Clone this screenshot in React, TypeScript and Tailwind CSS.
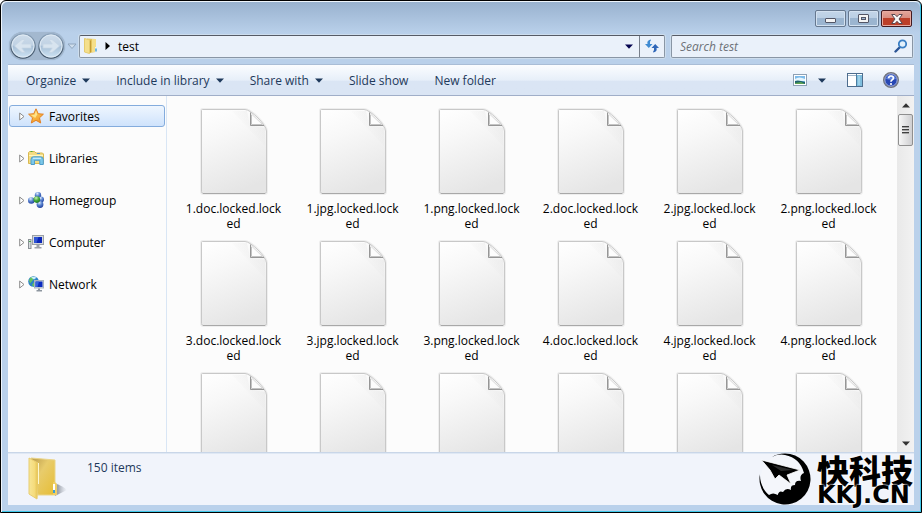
import { useId } from "react";
import type { ReactNode } from "react";

const files = [
  "1.doc", "1.jpg", "1.png", "2.doc", "2.jpg", "2.png",
  "3.doc", "3.jpg", "3.png", "4.doc", "4.jpg", "4.png",
  "5.doc", "5.jpg", "5.png", "6.doc", "6.jpg", "6.png",
];

function Caret({ className = "" }: { className?: string }) {
  return (
    <svg className={className} width="8" height="5" viewBox="0 0 8 5" aria-hidden="true">
      <path d="M0 0.5h8L4 4.8z" fill="currentColor" />
    </svg>
  );
}

function FileIcon() {
  const id = useId();
  return (
    <svg width="68" height="87" viewBox="0 0 68 87" className="block shrink-0" aria-hidden="true">
      <defs>
        <linearGradient id={id} x1="0.2" y1="0" x2="0.5" y2="1">
          <stop offset="0" stopColor="#fefefe" />
          <stop offset="0.3" stopColor="#f8f8f8" />
          <stop offset="1" stopColor="#e5e5e5" />
        </linearGradient>
        <linearGradient id={id + "s"} x1="0" y1="1" x2="1" y2="0">
          <stop offset="0.4" stopColor="#d2d2d2" stopOpacity="0" />
          <stop offset="1" stopColor="#cfcfcf" />
        </linearGradient>
      </defs>
      <path d="M2.5 1.5H45C51 1.5 66.5 17 66.5 23V83.5Q66.5 85.5 64.5 85.5H3.5Q1.5 85.5 1.5 83.5V2.5Q1.5 1.5 2.5 1.5Z" fill="none" stroke="#eeeeee" strokeWidth="3" />
      <path d="M2.5 1.5H45C51 1.5 66.5 17 66.5 23V83.5Q66.5 85.5 64.5 85.5H3.5Q1.5 85.5 1.5 83.5V2.5Q1.5 1.5 2.5 1.5Z" fill={`url(#${id})`} stroke="#c8c8c8" />
      <path d="M32 3H47L50 17.5L65 20V38Z" fill={`url(#${id}s)`} opacity="0.35" />
      <path d="M3 85.5H65" stroke="#a8a8a8" />
      <path d="M50.5 5V17.5H63.5Z" fill="#fdfdfd" stroke="#dadada" />
      <path d="M50.5 4.5V17.5H64" fill="none" stroke="#969696" />
      <path d="M51.5 7V16.5H62" fill="none" stroke="#c4c4c4" />
    </svg>
  );
}

function StarIcon() {
  return (
    <svg width="16" height="16" viewBox="0 0 16 16" aria-hidden="true">
      <defs>
        <linearGradient id="star" x1="0" y1="0" x2="0.6" y2="1">
          <stop offset="0" stopColor="#fff3a0" />
          <stop offset="0.5" stopColor="#fbc04a" />
          <stop offset="1" stopColor="#f09a2a" />
        </linearGradient>
      </defs>
      <path d="M8 0.8L10.200 5.7L15.400 6.2L11.500 9.8L12.700 15L8 12.300L3.300 15L4.500 9.8L0.600 6.2L5.800 5.7Z" fill="url(#star)" stroke="#e27f22" strokeLinejoin="round" />
      <path d="M8 3L9.300 6.6L7.200 10L3.500 7.2L6.600 6.7Z" fill="#fff4a8" opacity="0.7" />
    </svg>
  );
}

function LibrariesIcon() {
  return (
    <svg width="16" height="16" viewBox="0 0 16 16" aria-hidden="true">
      <path d="M0.5 13.500V2.500L1.500 1.500H6.500L8 3H14.500L15.500 4V13.500Z" fill="#f3dc83" stroke="#d9b951" />
      <path d="M1 5.500H15" stroke="#fff5bd" />
      <path d="M2.500 1.500h2" stroke="#4caa3a" />
      <path d="M9 3.500h3" stroke="#5596c8" />
      <path d="M3 14.500V9.500Q3 6.800 5.500 6.800H12.500Q15.300 6.800 15.300 9.500V14.500H11.800V10.300H6.500V14.500Z" fill="#7cc8e9" stroke="#4e9dcc" />
      <path d="M5 8.300H13" stroke="#d8f2fb" />
    </svg>
  );
}

function HomegroupIcon() {
  return (
    <svg width="16" height="16" viewBox="0 0 16 16" aria-hidden="true">
      <defs>
        <radialGradient id="blue" cx="0.4" cy="0.25" r="0.8">
          <stop offset="0" stopColor="#e3eefc" />
          <stop offset="0.45" stopColor="#5d87d2" />
          <stop offset="1" stopColor="#1b3a98" />
        </radialGradient>
        <radialGradient id="green" cx="0.4" cy="0.25" r="0.8">
          <stop offset="0" stopColor="#c9f2b5" />
          <stop offset="0.5" stopColor="#46ab3c" />
          <stop offset="1" stopColor="#187321" />
        </radialGradient>
      </defs>
      <circle cx="10" cy="3.2" r="3.200" fill="url(#blue)" />
      <circle cx="3.300" cy="8.500" r="3.300" fill="url(#blue)" />
      <circle cx="13" cy="7.500" r="3" fill="url(#blue)" />
      <circle cx="12" cy="12.500" r="3.400" fill="url(#blue)" />
      <circle cx="8.800" cy="7.600" r="3.300" fill="url(#green)" />
    </svg>
  );
}

function ComputerIcon() {
  return (
    <svg width="16" height="16" viewBox="0 0 16 16" aria-hidden="true">
      <rect x="0.500" y="5.500" width="2.500" height="9" fill="#d8dcdf" stroke="#8b9196" />
      <path d="M1 7.500h2" stroke="#46a850" />
      <rect x="4.500" y="1.500" width="11" height="9" fill="#d5d8dc" stroke="#9ba1a7" />
      <rect x="6" y="3" width="8" height="6" fill="#0b26b8" />
      <path d="M6 3H10.500L8.500 9H6Z" fill="#2f55d4" />
      <path d="M8.500 11H11.500V13H13.500V14.500H6.500V13H8.500Z" fill="#9da2a8" />
    </svg>
  );
}

function NetworkIcon() {
  return (
    <svg width="16" height="16" viewBox="0 0 16 16" aria-hidden="true">
      <circle cx="5.500" cy="5.500" r="5.300" fill="#2b82c9" />
      <path d="M1 4Q3 0 6 1L5 4L2 7.500ZM6 6L8 8L6 11L4 9Z" fill="#64c45c" />
      <path d="M3 1.500Q6 0 8.500 1.800L6 3.500Z" fill="#cdeffa" />
      <rect x="6.500" y="4.500" width="9" height="7.500" fill="#cfd6df" stroke="#a9b4bf" />
      <rect x="7.500" y="5.500" width="7" height="5.500" fill="#0c2cc0" />
      <path d="M7.500 5.500H11L9.500 11H7.500Z" fill="#3563dc" />
      <path d="M10 12.500H12V14H14V15.500H8.500V14H10Z" fill="#8d969f" />
    </svg>
  );
}

function FolderIcon({ width, height }: { width: number; height: number }) {
  const id = useId();
  return (
    <svg width={width} height={height} viewBox="0 0 40 44" aria-hidden="true">
      <defs>
        <linearGradient id={id}>
          <stop offset="0" stopColor="#f7e596" />
          <stop offset="0.6" stopColor="#f5dc7c" />
          <stop offset="1" stopColor="#e3bf4c" />
        </linearGradient>
        <linearGradient id={id + "b"} x1="0" y1="0" x2="1" y2="1">
          <stop offset="0" stopColor="#b99a4c" />
          <stop offset="0.4" stopColor="#e8cc6c" />
          <stop offset="1" stopColor="#e6bd35" />
        </linearGradient>
        <linearGradient id={id + "s"}>
          <stop offset="0.3" stopColor="#777d88" stopOpacity="0.7" />
          <stop offset="1" stopColor="#a5abb5" stopOpacity="0" />
        </linearGradient>
      </defs>
      <path d="M26 26Q35 29 39 33L27 39Z" fill={`url(#${id}s)`} />
      <path d="M3 1L27 3V38L10 38Z" fill={`url(#${id}b)`} stroke="#ead58a" />
      <path d="M25 25Q29 25 29 28V38L25 38Z" fill="#f0cf66" />
      <path d="M26 27V34" stroke="#fff" strokeWidth="2" />
      <path d="M26 33V36" stroke="#3c9fd6" strokeWidth="2" />
      <path d="M1 1L10 6V27L9 42L1 37Z" fill={`url(#${id})`} stroke="#e8cd70" />
      <path d="M10.500 6V27" stroke="#fdf7cf" />
    </svg>
  );
}

function SmallFolderIcon() {
  return (
    <svg width="14" height="16" viewBox="0 0 14 16" className="shrink-0" aria-hidden="true">
      <path d="M3 0.500L11.500 1V14L5 15Z" fill="#e3c35c" />
      <path d="M8 1H12V14H8Z" fill="#f5df8a" />
      <path d="M0.500 0.500L5.500 2V15.500L0.500 14Z" fill="#f4df8c" stroke="#e5cb6f" />
      <path d="M6.500 2.500V14.500" stroke="#c39c35" />
      <path d="M11 9H13V14H11Z" fill="#e9f3f8" />
      <path d="M12 10.500V13.500" stroke="#4aa3d8" strokeWidth="1.500" />
    </svg>
  );
}

function Orb({ flip = false }: { flip?: boolean }) {
  const id = useId();
  return (
    <svg width="28" height="28" viewBox="0 0 28 28" aria-hidden="true" className={flip ? "block -scale-x-100" : "block"}>
      <defs>
        <linearGradient id={id} x1="0" y1="0" x2="0" y2="1">
          <stop offset="0" stopColor="#cfddeb" />
          <stop offset="0.46" stopColor="#c0d2e4" />
          <stop offset="0.52" stopColor="#a8c0d7" />
          <stop offset="1" stopColor="#d0e6f6" />
        </linearGradient>
        <linearGradient id={id + "r"} x1="0" y1="0" x2="0" y2="1">
          <stop offset="0" stopColor="#8da4bc" />
          <stop offset="1" stopColor="#3e5063" />
        </linearGradient>
      </defs>
      <circle cx="14" cy="14" r="12.200" fill={`url(#${id})`} stroke={`url(#${id}r)`} strokeWidth="1.200" />
      <circle cx="14" cy="14" r="11" fill="none" stroke="#dfeaf4" />
      <path d="M5.500 14L13 7.500H16L12.800 12H22V16H12.800L16 20.500H13Z" fill="#d8e4ef" stroke="#c6d6e5" strokeWidth="0.800" />
    </svg>
  );
}

function ToolButton({ children, menu = false }: { children: ReactNode; menu?: boolean }) {
  return (
    <button type="button" className="flex items-center gap-[6px] whitespace-nowrap">
      {children}
      {menu && <Caret />}
    </button>
  );
}

function WindowButton({ label, close = false, children }: { label: string; close?: boolean; children: ReactNode }) {
  return (
    <button
      type="button"
      aria-label={label}
      className={
        "flex h-[17px] w-[31px] items-center justify-center rounded-[2px] border " +
        (close
          ? "border-[#431a20] bg-linear-to-b from-[#e3a79c] from-0% via-[#d98e82] via-45% to-[#c9634c] shadow-[inset_0_0_0_1px_#e7aaa0,inset_0_-8px_0_0_#bc3f29]"
          : "border-[#66788f] bg-linear-to-b from-[#c3d5e8] to-[#b0c8e0] shadow-[inset_0_0_0_1px_#d3e1f0,inset_0_-8px_0_0_#9bb5d0]")
      }
    >
      {children}
    </button>
  );
}

const places = [
  { name: "Favorites", icon: <StarIcon />, active: true },
  { name: "Libraries", icon: <LibrariesIcon />, active: false },
  { name: "Homegroup", icon: <HomegroupIcon />, active: false },
  { name: "Computer", icon: <ComputerIcon />, active: false },
  { name: "Network", icon: <NetworkIcon />, active: false },
];

function Watermark() {
  return (
    <div className="absolute right-2 bottom-[7px] flex items-center gap-1 text-black">
      <svg width="56" height="52" viewBox="0 0 56 52" aria-hidden="true">
        <circle cx="28" cy="26" r="24.500" fill="#f4f6fb" />
        <path
          fillRule="evenodd"
          d="M28 0.500A25.500 25.500 0 1 1 3 21C2.500 30 7 38 12 42Q16 39 20.700 42Q22 37 26 39Q29 34 34 37Q33 32 38 32Q38 27 44 28Q42 22 47 20Q43 5 28 2Q22 0.500 15 4Q20 0.500 28 0.500Z"
        />
        <path d="M4.500 7L43 17L30 22L34 31L22 22L18 26L13 17Z" stroke="#fff" strokeWidth="0.800" />
        <path d="M15 12L36 17L24 18Z" fill="#2a2a2a" />
      </svg>
      <div className="flex flex-col [text-shadow:0_0_2px_#fff,0_0_2px_#fff]">
        <span className="font-['Noto_Sans_CJK_SC',sans-serif] text-[32px] leading-[32px] font-black">快科技</span>
        <span className="font-['DejaVu_Sans',sans-serif] text-[24px] leading-[20px] font-bold">KKJ.CN</span>
      </div>
    </div>
  );
}

export default function App() {
  return (
    <div className="relative flex h-screen flex-col overflow-hidden rounded-t-md border border-black bg-[#bad1eb] font-['Open_Sans','Noto_Sans',sans-serif] text-[12px] leading-[15px] text-black shadow-[inset_1px_1px_0_#eef5fc,inset_-1px_-1px_0_#3fc8ea]">
      <header className="m-px mb-0 rounded-t-md bg-linear-to-b from-[#99b2cf] to-[#b9d0ea] to-50% px-[7px]">
        <div className="flex justify-end gap-[2px] pt-2 pr-px">
          <WindowButton label="Minimize">
            <svg width="11" height="5" viewBox="0 0 11 5" className="mt-1" aria-hidden="true">
              <rect x="0.500" y="0.500" width="10" height="4" rx="0.500" fill="#f4f4f4" stroke="#535666" />
            </svg>
          </WindowButton>
          <WindowButton label="Maximize">
            <svg width="11" height="9" viewBox="0 0 11 9" aria-hidden="true">
              <rect x="0.500" y="0.500" width="10" height="8" rx="0.500" fill="#f4f4f4" stroke="#535666" />
              <rect x="3.500" y="3.500" width="4" height="2" fill="#9db5d0" stroke="#535666" />
            </svg>
          </WindowButton>
          <WindowButton label="Close" close>
            <svg width="12" height="10" viewBox="0 0 12 10" aria-hidden="true">
              <path d="M0.700 0.500H4L6 2.700L8 0.500H11.300L8 5L11.300 9.500H8L6 7.300L4 9.500H0.700L4 5Z" fill="#f8f8f8" stroke="#5a4a52" />
            </svg>
          </WindowButton>
        </div>
        <div className="flex items-center pt-[5px] pb-1">
          <div className="flex shrink-0 rounded-full bg-[#a3b8cf] shadow-[0_0_1px_#8fa5be]">
            <button type="button" aria-label="Back"><Orb /></button>
            <button type="button" aria-label="Forward"><Orb flip /></button>
          </div>
          <button type="button" aria-label="Recent locations" className="mx-[2px] shrink-0">
            <svg width="10" height="7" viewBox="0 0 10 7" aria-hidden="true">
              <path d="M1 1H9L5 5.500Z" fill="#cfdeed" stroke="#8fa5be" />
            </svg>
          </button>
          <div className="flex h-[23px] min-w-0 flex-1 rounded-[2px] border border-[#8996a5] border-t-[#565b66] bg-[#eaf1fa] shadow-[0_0_0_1px_#cddded]">
            <div className="flex min-w-0 flex-1 items-center pl-1">
              <SmallFolderIcon />
              <svg width="5" height="8" viewBox="0 0 5 8" className="mr-2 ml-[7px]" aria-hidden="true">
                <path d="M0.500 0L5 4L0.500 8Z" fill="#000" />
              </svg>
              <span>test</span>
            </div>
            <button type="button" aria-label="Previous locations" className="px-[6px] text-[#040450]">
              <Caret />
            </button>
            <button type="button" aria-label="Refresh" className="flex w-[25px] items-center justify-center border-l border-[#777f8b]">
              <svg width="14" height="14" viewBox="0 0 14 14" aria-hidden="true">
                <path d="M5.500 0.500Q1.500 1.500 2.500 5H0L3.800 9L7.500 5H5Q4.500 2.500 6 1Z" fill="#3f8bd2" />
                <path d="M8.500 13.500Q12.500 12.500 11.500 9H14L10.200 5L6.500 9H9Q9.500 11.500 8 13Z" fill="#2f67b8" />
              </svg>
            </button>
          </div>
          <label className="ml-[6px] flex h-[23px] w-[242px] items-center rounded-[2px] border border-[#8996a5] border-t-[#565b66] bg-[#eaf1fa] pr-1 pl-2 shadow-[0_0_0_1px_#cddded]">
            <input
              type="text"
              aria-label="Search test"
              placeholder="Search test"
              className="min-w-0 flex-1 bg-transparent italic outline-none placeholder:text-[#6e7278]"
            />
            <svg width="14" height="14" viewBox="0 0 14 14" aria-hidden="true">
              <path d="M6 8L1.500 12.500" stroke="#2c5595" strokeWidth="2.400" strokeLinecap="round" />
              <circle cx="8.500" cy="5" r="3.700" fill="#e3f1fc" stroke="#3b7fc4" strokeWidth="1.800" />
            </svg>
          </label>
        </div>
      </header>

      <div className="mx-[7px] mb-[7px] flex min-h-0 flex-1 flex-col">
        <div className="flex h-8 shrink-0 items-center gap-[26px] border-t border-b border-t-[#a9bdd6] border-b-[#a0aec8] bg-linear-to-b from-[#fbfdff] from-0% via-[#e7eff9] via-50% to-[#dae5f4] to-55% pr-[15px] pl-[18px] text-[#1e395b]">
          <ToolButton menu>Organize</ToolButton>
          <ToolButton menu>Include in library</ToolButton>
          <ToolButton menu>Share with</ToolButton>
          <ToolButton>Slide show</ToolButton>
          <ToolButton>New folder</ToolButton>
          <div className="ml-auto flex items-center">
            <button type="button" aria-label="Change your view" className="flex items-center gap-[11px]">
              <svg width="14" height="12" viewBox="0 0 14 12" aria-hidden="true">
                <rect x="0.500" y="0.500" width="13" height="11" fill="#fff" stroke="#8da0b4" />
                <rect x="2" y="2" width="10" height="8" fill="#7dbbea" />
                <path d="M2 5Q6 2 12 5V7H2Z" fill="#e6f5fd" />
                <path d="M2 7Q5 5.500 12 8V10H2Z" fill="#1e646c" />
                <path d="M2 9L8 8L12 10H2Z" fill="#5da152" />
              </svg>
              <Caret />
            </button>
            <button type="button" aria-label="Show the preview pane" className="mr-5 ml-[21px]">
              <svg width="16" height="14" viewBox="0 0 16 14" className="block" aria-hidden="true">
                <rect x="0.500" y="0.500" width="15" height="13" fill="#fff" stroke="#4d6d8e" />
                <path d="M1 2.500H15" stroke="#9fb5ca" />
                <rect x="10" y="2" width="5" height="11" fill="#7fbede" />
                <path d="M9.500 1V13" stroke="#4d7da0" />
                <path d="M12 3V12" stroke="#bde3f3" />
              </svg>
            </button>
            <button type="button" aria-label="Get help">
              <svg width="16" height="16" viewBox="0 0 16 16" className="block" aria-hidden="true">
                <circle cx="8" cy="8" r="7.300" fill="#2747b4" stroke="#73757c" strokeWidth="1.400" />
                <circle cx="8" cy="8" r="6.200" fill="none" stroke="#c9cfdf" strokeWidth="0.800" />
                <path d="M3 7Q4 3 8 2.700Q12 3 13 7Q8 8.500 3 7Z" fill="#5f83dc" />
                <path d="M5.700 6.300Q5.700 4 8 4Q10.400 4 10.400 6Q10.400 7.200 9 8Q8 8.500 8 9.700" fill="none" stroke="#fff" strokeWidth="1.700" />
                <circle cx="8" cy="12" r="1.100" fill="#fff" />
              </svg>
            </button>
          </div>
        </div>

        <div className="flex min-h-0 flex-1 bg-[#fcfcfc]">
          <nav aria-label="Places" className="flex w-[159px] shrink-0 flex-col gap-5 border-r border-[#d9e6f5] pt-[9px] pr-px pl-px">
            {places.map((p) => (
              <a
                key={p.name}
                href="#"
                className={
                  "flex h-[22px] items-center rounded-[3px] border pl-[9px] " +
                  (p.active
                    ? "border-[#84acdd] bg-linear-to-b from-[#eff6fe] to-[#cfe3fc]"
                    : "border-transparent")
                }
              >
                <svg width="6" height="9" viewBox="0 0 6 9" className="mr-[3px] shrink-0" aria-hidden="true">
                  <path d="M0.700 1L5 4.500L0.700 8Z" fill="#fff" stroke="#8c8c8c" />
                </svg>
                {p.icon}
                <span className="ml-[5px]">{p.name}</span>
              </a>
            ))}
          </nav>

          <main className="min-w-0 flex-1 overflow-y-auto pt-3 pl-[7px] [scrollbar-width:none]">
            <ul className="grid grid-cols-[repeat(auto-fill,119px)] gap-y-[14px]">
              {files.map((f) => (
                <li key={f} className="flex h-[118px] flex-col items-center">
                  <FileIcon />
                  <span className="mt-[6px] w-[98px] text-center break-all">{f}.locked.locked</span>
                </li>
              ))}
            </ul>
          </main>

          <div className="flex w-[17px] shrink-0 flex-col items-center bg-linear-to-r from-[#e9e9e9] to-[#f2f2f2]">
            <button type="button" aria-label="Scroll up" className="flex h-[18px] items-center text-[#333]">
              <Caret className="rotate-180" />
            </button>
            <div className="flex h-8 w-[15px] flex-col items-center justify-center gap-px rounded-[2px] border border-[#8f8f8f] bg-linear-to-r from-[#f7f7f7] to-[#cfcfd1]">
              <span className="h-[2px] w-[7px] border-t border-[#404040] bg-[#a5a5a5]" />
              <span className="h-[2px] w-[7px] border-t border-[#404040] bg-[#a5a5a5]" />
              <span className="h-[2px] w-[7px] border-t border-[#404040] bg-[#a5a5a5]" />
            </div>
            <button type="button" aria-label="Scroll down" className="mt-auto flex h-[17px] items-center text-[#333]">
              <Caret />
            </button>
          </div>
        </div>

        <footer className="flex h-[53px] shrink-0 items-start border-t border-[#c9d6e8] bg-[#f1f4fb] pt-1 pl-5 text-[#1e395b] shadow-[inset_0_1px_0_#dfe8f4]">
          <FolderIcon width={40} height={44} />
          <span className="mt-[3px] ml-[19px]">150 items</span>
        </footer>
      </div>
      <Watermark />
    </div>
  );
}
